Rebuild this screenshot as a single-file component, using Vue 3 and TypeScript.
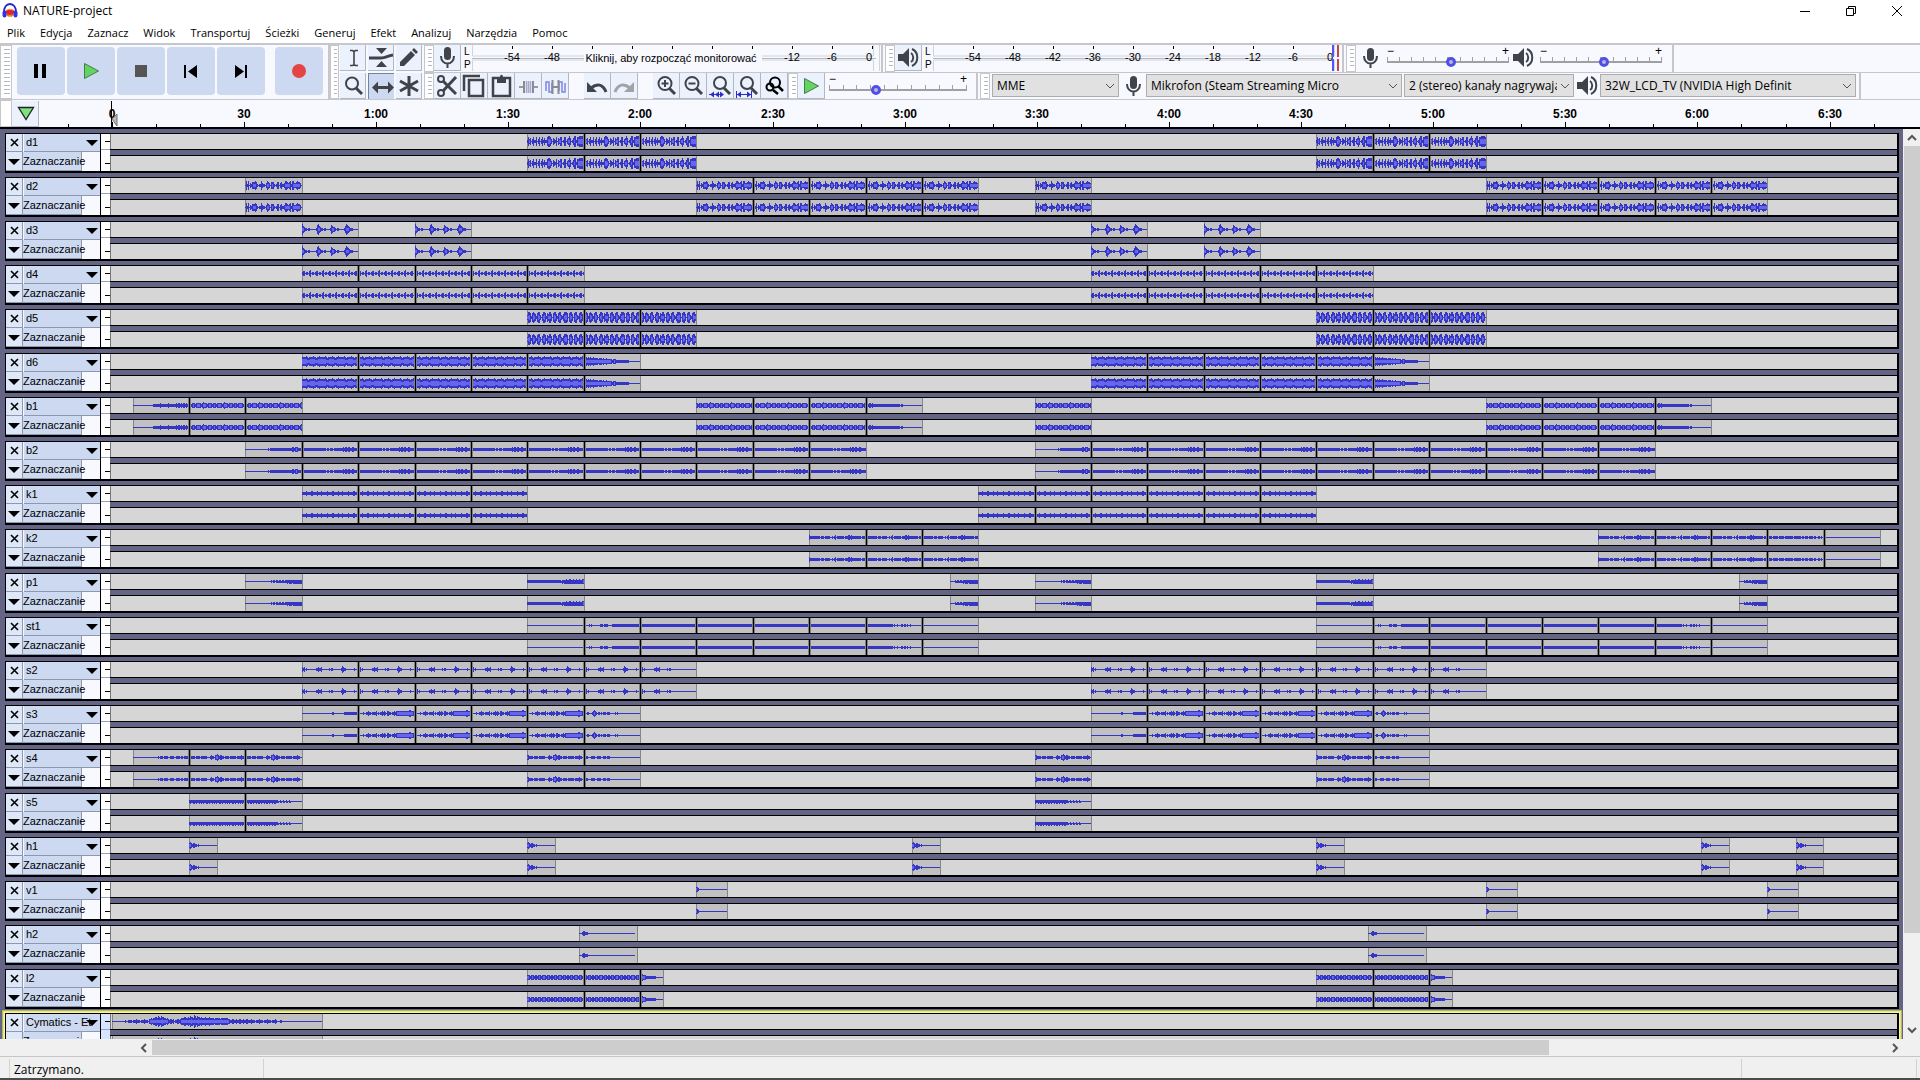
<script setup lang="ts">
interface Run {
  from: number
  to: number
  body: string
  first?: string
  last?: string
}

interface Track {
  name: string
  runs: Run[]
  selected?: boolean
}

interface Piece {
  x: number
  w: number
  peak: string
  rms: string
}

interface Clip {
  x: number
  w: number
  joints: number[]
  pieces: Piece[]
}

const BAR = 56.37
const FIRST_BAR = 21.7
const PX_PER_SECOND = 4.404
const RULER_ZERO = 73

// Each digit is the half height of one pixel column of the waveform;
// a, b and c are columns that reach further down than up.
const tile = (pattern: string, length = 57): string =>
  pattern.repeat(Math.ceil(length / pattern.length)).slice(0, length)
const flat = (length: number): string => '0'.repeat(length)

const shapes = {
  d1: '142302411402402413114554203214032440144023530135514455554',
  d2: '041402133343101142110243203331013302311244323414422343320',
  d3: '53211011000000' + '14532110110000' + '14322101100000' + '135432111000000',
  d4: tile('1220110230110'),
  d5: '255414543145520355414355304553145521355540455304552145530',
  d6: tile('4444543444454434454'),
  d6End: '444343433433332333232232222212221111111111111' + flat(12),
  b1: tile('221222122222123222122'),
  b1Start: flat(20) + tile('11111112', 22) + tile('12122', 15),
  b1End: '2212212' + tile('1', 24) + '1110110' + flat(19),
  b2: tile('1', 23) + '101101110111111111212212211221111'.padEnd(34, '1'),
  b2Start: flat(23) + '101' + tile('1', 20) + '12212221111',
  k1: tile('111121111221111211121'),
  k2: '211111111110111011111001012011111110111221211111111101111',
  k2Mid: '111110111011101111001101110110' + flat(27),
  k2End: '111110111110111110111111110111111101101110111101100110100',
  p1: flat(26) + tile('101', 6) + tile('1b1', 10) + 'a1aaa1aaaaaaaaa',
  p1Long: tile('1', 34) + 'ba1aa2aa22aa2aa2aa2aa22',
  p1Short: flat(5) + tile('1b1', 8) + 'a1aaa1aaaaaaaaa',
  rest: flat(57),
  st: tile('1'),
  stStart: '000001010000000011101111000011' + tile('1', 27),
  stEnd: tile('1', 27) + '010010001101101001' + flat(12),
  s2: '212010000000001121120000000101100000000132110000000010000',
  s3: '110001001121101111201011212102211011212222222222222332221',
  s3Start: flat(30) + '11' + flat(10) + tile('1', 15),
  s3End: '110110001232101101011101110000010100' + flat(21),
  s4: '221111011110111111000121102232122110111101111110111121100',
  s4Start: flat(25) + '10111011110011110011110110111100',
  s4End: '11110001111001111001110111' + flat(31),
  s5: tile('1a11aa1a11a1a'),
  s5End: tile('a11a1aa1', 32) + tile('1b0', 14) + flat(11),
  h1: '2321221101' + flat(18),
  v1: '2210' + flat(27),
  h2: '0001221110' + flat(48),
  l2: tile('2221222122122212'),
  l2End: '2332221111111111' + flat(8),
  cymatics:
    flat(13) + '1001' + tile('11101112', 20) + '22323344354354433232' + tile('1221201', 11) +
    '2333443343544365354434333433343333233333233333332' + tile('2112211', 20) +
    tile('11211101', 28) + '000110' + flat(40),
}

const twice = (from: number, to: number, body: string, first?: string, last?: string): Run[] => [
  { from, to, body, first, last },
  { from: from + 14, to: to + 14, body, first, last },
]
const one = (from: number, to: number, body: string, first?: string, last?: string): Run => ({
  from,
  to,
  body,
  first,
  last,
})

const s = shapes
const tracks: Track[] = [
  { name: 'd1', runs: twice(7, 10, s.d1) },
  { name: 'd2', runs: [...twice(2, 3, s.d2), ...twice(10, 15, s.d2)] },
  { name: 'd3', runs: [...twice(3, 4, s.d3), ...twice(5, 6, s.d3)] },
  { name: 'd4', runs: twice(3, 8, s.d4) },
  { name: 'd5', runs: twice(7, 10, s.d5) },
  { name: 'd6', runs: twice(3, 9, s.d6, s.d6, s.d6End) },
  { name: 'b1', runs: [one(0, 3, s.b1, s.b1Start), one(16, 17, s.b1), ...twice(10, 14, s.b1, s.b1, s.b1End)] },
  { name: 'b2', runs: twice(2, 13, s.b2, s.b2Start) },
  { name: 'k1', runs: [one(3, 7, s.k1), one(15, 21, s.k1)] },
  { name: 'k2', runs: [one(12, 15, s.k2), one(26, 29, s.k2), one(29, 31, s.k2End, s.k2End, s.rest)] },
  {
    name: 'p1',
    runs: [...twice(2, 3, s.p1), ...twice(7, 8, s.p1Long), ...twice(14.5, 15, s.p1Short)],
  },
  {
    name: 'st1',
    runs: [0, 14].flatMap((n) => [
      one(7 + n, 9 + n, s.stStart, s.rest),
      one(9 + n, 13 + n, s.st),
      one(13 + n, 15 + n, s.rest, s.stEnd),
    ]),
  },
  { name: 's2', runs: twice(3, 10, s.s2, s.s2, s.s2.slice(0, 34) + flat(23)) },
  { name: 's3', runs: twice(3, 9, s.s3, s.s3Start, s.s3End) },
  { name: 's4', runs: [one(0, 3, s.s4, s.s4Start), one(16, 17, s.s4), ...twice(7, 9, s.s4, s.s4, s.s4End)] },
  { name: 's5', runs: [one(1, 3, s.s5, s.s5, s.s5End), one(16, 17, s.s5End)] },
  {
    name: 'h1',
    runs: [one(1, 1.49, s.h1), ...twice(7, 7.49, s.h1), ...twice(13.83, 14.32, s.h1), one(29.5, 29.98, s.h1)],
  },
  { name: 'v1', runs: [...twice(10, 10.55, s.v1), one(29, 29.55, s.v1)] },
  { name: 'h2', runs: twice(7.91, 8.94, s.h2) },
  { name: 'l2', runs: twice(7, 9.41, s.l2, s.l2, s.l2End) },
  { name: 'Cymatics - Et', runs: [one(-0.367, 3.36, s.cymatics)], selected: true },
]

const toX = (bar: number): number => Math.round(FIRST_BAR + bar * BAR)

const skewed: Record<string, [number, number]> = { a: [1, 2], b: [0, 1], c: [1, 3] }

function wave(x: number, width: number, digits: string): Piece {
  const spans = digits.slice(0, width).split('').map((d): [number, number] => skewed[d] ?? [Number(d), Number(d)])
  const peak = spans.map(([up, down], i) => `M${x + i} ${7 - up}h1v${up + down + 1}h-1z`).join('')
  const rms = spans
    .map(([up], i) => {
      const low = Math.min(spans[i - 1]?.[0] ?? up, up, spans[i + 1]?.[0] ?? up)
      const h = Math.floor(low * 0.5)
      return low < 2 ? '' : `M${x + i} ${7 - h}h1v${2 * h + 1}h-1z`
    })
    .join('')
  return { x, w: width, peak, rms }
}

function build(run: Run): Clip {
  const x = toX(run.from)
  const w = toX(run.to) - x
  const joints: number[] = []
  const pieces: Piece[] = []
  const long = run.body.length > 60
  const count = long ? 1 : Math.ceil(run.to - run.from - 0.1)
  for (let i = 0; i < count; i++) {
    const start = toX(run.from + i)
    const end = long ? x + w : Math.min(toX(run.from + i + 1), x + w)
    if (i > 0) joints.push(start)
    const digits = i === 0 ? run.first ?? run.body : i === count - 1 ? run.last ?? run.body : run.body
    pieces.push(wave(start, end - start, digits))
  }
  return { x, w, joints, pieces }
}

const lanes = tracks.map((track) => {
  const clips = track.runs.map(build)
  const starts = new Set(clips.map((c) => c.x))
  clips.forEach((c) => {
    if (starts.has(c.x + c.w)) c.joints.push(c.x + c.w)
  })
  return { ...track, clips, joints: clips.flatMap((c) => c.joints) }
})

const ticks = Array.from({ length: 42 }, (_, i) => {
  const seconds = (i - 1) * 10
  const major = seconds % 30 === 0
  const label = seconds < 60 ? `${seconds}` : `${Math.floor(seconds / 60)}:${String(seconds % 60).padStart(2, '0')}`
  return { x: Math.round(RULER_ZERO + seconds * PX_PER_SECOND), major, label: major && seconds >= 0 ? label : '' }
})

const menus = ['Plik', 'Edycja', 'Zaznacz', 'Widok', 'Transportuj', 'Ścieżki', 'Generuj', 'Efekt', 'Analizuj', 'Narzędzia', 'Pomoc']
const levels = [-54, -48, -42, -36, -30, -24, -18, -12, -6, 0]
const levelX = (db: number): number => 400 + Math.round((db * 20) / 3)
const shownOnInput = (db: number): boolean => db < -45 || db > -15
</script>

<template>
  <div class="app">
    <header class="title-bar">
      <svg class="logo" width="16" height="16" viewBox="0 0 16 16">
        <ellipse cx="8" cy="10" rx="4.5" ry="4" fill="#f7a531" />
        <path d="M4 10l1-2 1 3 1-4 1 5 1-5 1 4 1-3 1 2" fill="none" stroke="#e0242a" stroke-width="1.6" />
        <path d="M2 10C1 -2 15 -2 14 10" fill="none" stroke="#1d24cf" stroke-width="1.8" />
        <rect x="0.5" y="7.5" width="4" height="7" rx="2" fill="#2b34ea" />
        <rect x="11.5" y="7.5" width="4" height="7" rx="2" fill="#2b34ea" />
      </svg>
      <h1>NATURE-project</h1>
      <div class="window-buttons">
        <button aria-label="Minimalizuj"><svg width="12" height="12"><path d="M1 6.5h10" /></svg></button>
        <button aria-label="Przywróć"><svg width="12" height="12"><path d="M1.500 3.500h7v7h-7zM3.500 3.500v-2h7v7h-2" /></svg></button>
        <button aria-label="Zamknij"><svg width="12" height="12"><path d="M1 1l10 10M11 1l-10 10" /></svg></button>
      </div>
    </header>

    <nav class="menu">
      <button v-for="menu in menus" :key="menu">{{ menu }}</button>
    </nav>

    <section class="toolbars">
      <div class="bar transport">
        <i class="grip"></i>
        <div class="transport-buttons">
          <button aria-label="Pauza"><svg width="48" height="48"><path d="M17 17h4v14h-4zM25 17h4v14h-4z" /></svg></button>
          <button aria-label="Odtwórz"><svg width="48" height="48"><path d="M17.500 16.500v15l14-7.500z" fill="#61d461" stroke="#4a7a4a" /></svg></button>
          <button aria-label="Zatrzymaj"><svg width="48" height="48"><path d="M18 18h12v12h-12z" fill="#555" /></svg></button>
          <button aria-label="Do początku"><svg width="48" height="48"><path d="M17 18h2v13h-2zM30 18v13l-9-6.500z" /></svg></button>
          <button aria-label="Do końca"><svg width="48" height="48"><path d="M28 18h2v13h-2zM18 18v13l9-6.500z" /></svg></button>
          <button class="record" aria-label="Nagraj"><svg width="48" height="48"><circle cx="24" cy="24" r="7" fill="#e34545" /></svg></button>
        </div>
      </div>

      <div class="bar tools">
        <i class="grip"></i>
        <div class="tool-grid">
          <button class="tool" aria-label="Zaznaczanie"><svg class="ico" viewBox="0 0 26 26"><path d="M10 5.500h2.500l1.500 1 1.500-1h2.500M14 6v14M10 20.500h2.500l1.500-1 1.500 1h2.500" fill="none" stroke-width="1.600" /></svg></button>
          <button class="tool" aria-label="Obwiednia"><svg class="ico" viewBox="0 0 26 26"><path d="M8 3h11l-5.500 6zM8 22h11l-5.500-6z" stroke="none" /><path d="M1 13h12c5 0 6-2 12-3" fill="none" stroke-width="3" /></svg></button>
          <button class="tool" aria-label="Rysowanie"><svg class="ico" viewBox="0 0 26 26"><path d="M4 21v-4l11-11 4 4-11 11zM16 5l2-2 4 4-2 2z" stroke="none" /></svg></button>
          <button class="tool" aria-label="Powiększanie"><svg class="ico" viewBox="0 0 26 26"><g fill="none"><circle cx="12" cy="10.500" r="6" stroke-width="2" /><path d="M16 15l6 6" stroke-width="3" /></g></svg></button>
          <button class="tool pressed" aria-label="Przesuwanie"><svg class="ico" viewBox="0 0 26 26"><path d="M8 13.500h13" stroke-width="3" /><path d="M3 13.500l6-6v12zM25 13.500l-6-6v12z" stroke="none" /></svg></button>
          <button class="tool" aria-label="Wielofunkcyjne"><svg class="ico" viewBox="0 0 26 26"><path d="M13 3v20M4 8l18 10M22 8L4 18" stroke-width="3" /></svg></button>
        </div>
      </div>

      <div class="rows">
        <div class="row">
          <div class="bar">
            <i class="grip"></i>
            <button class="tool" aria-label="Miernik nagrywania"><svg class="ico" viewBox="0 0 26 26"><rect x="10" y="2" width="7" height="13" rx="3.500" stroke="none" /><path d="M7 11c0 10 13 10 13 0M13.500 18v5" fill="none" stroke-width="2" /></svg></button>
            <div class="channels"><span>L</span><span>P</span></div>
            <svg class="meter" width="412" height="26">
              <path d="M0.500 0v11h401V0M0.500 26V15h401v11M407.500 0v26" fill="none" stroke="#d0d4dc" />
              <path d="M0 13.500h404" stroke="#b5b8bd" />
              <rect x="112" y="5" width="178" height="20" fill="#f8f9fe" />
              <g v-for="db in levels" :key="db">
                <path :d="`M${levelX(db)}.500 1v3`" stroke="#000" />
                <text v-if="shownOnInput(db)" :x="db ? levelX(db) : 397" y="16">{{ db }}</text>
              </g>
              <text x="199" y="17">Kliknij, aby rozpocząć monitorować</text>
            </svg>
          </div>
          <div class="bar">
            <i class="grip"></i>
            <button class="tool" aria-label="Miernik odtwarzania"><svg class="ico" viewBox="0 0 26 26"><path d="M3 9h5l6-6v19l-6-6H3z" stroke="none" /><path d="M16 8c3 2 3 7 0 9M17 4c7 3 7 14 0 17" fill="none" stroke-width="2" /></svg></button>
            <div class="channels"><span>L</span><span>P</span></div>
            <svg class="meter" width="412" height="26">
              <path d="M0.500 0v11h401V0M0.500 26V15h401v11" fill="none" stroke="#d0d4dc" />
              <path d="M0 13.500h400" stroke="#b5b8bd" />
              <g v-for="db in levels" :key="db">
                <path :d="`M${levelX(db)}.500 1v3`" stroke="#000" />
                <text :x="db ? levelX(db) : 397" y="16">{{ db }}</text>
              </g>
              <path d="M400 0v12M400 14v12" stroke="#5353ff" stroke-width="2" />
              <path d="M405 0v12M405 14v12" stroke="#c94545" stroke-width="2" />
            </svg>
          </div>
          <div class="bar mixer">
            <i class="grip"></i>
            <svg class="ico" viewBox="0 0 26 26"><rect x="10" y="3" width="7" height="13" rx="3.500" stroke="none" /><path d="M7 11c0 10 13 10 13 0M13.500 18v5" fill="none" stroke-width="2" /></svg>
            <div class="slider">
              <b>−</b><b>+</b>
              <i class="ticks"></i>
              <input type="range" aria-label="Głośność nagrywania" min="0" max="100" value="53" />
            </div>
            <svg class="ico" viewBox="0 0 26 26"><path d="M3 9h5l6-6v19l-6-6H3z" stroke="none" /><path d="M16 8c3 2 3 7 0 9M17 4c7 3 7 14 0 17" fill="none" stroke-width="2" /></svg>
            <div class="slider">
              <b>−</b><b>+</b>
              <i class="ticks"></i>
              <input type="range" aria-label="Głośność odtwarzania" min="0" max="100" value="53" />
            </div>
          </div>
        </div>

        <div class="row">
          <div class="bar edit">
            <i class="grip"></i>
            <button class="tool" aria-label="Wytnij"><svg class="ico" viewBox="0 0 26 26"><g fill="none"><circle cx="7" cy="6" r="3" stroke-width="2" /><circle cx="7" cy="20" r="3" stroke-width="2" /><path d="M9 8l13 13M9 18L22 4" stroke-width="3" /></g></svg></button>
            <button class="tool" aria-label="Kopiuj"><svg class="ico" viewBox="0 0 26 26"><path d="M3 18V3h16M8 7h14v16H8z" fill="none" stroke-width="2.500" /></svg></button>
            <button class="tool" aria-label="Wklej"><svg class="ico" viewBox="0 0 26 26"><path d="M5 5h17v18H5z" fill="none" stroke-width="2.500" /><path d="M9 4h3c0-3 3-3 3 0h3v6H9z" stroke="none" /></svg></button>
            <button class="tool" aria-label="Przytnij"><svg class="ico" viewBox="0 0 26 26"><path d="M4 14h5M18 14h5" stroke="#999" stroke-width="2" /><path d="M9 8v12M18 8v12" stroke="#8a8a90" stroke-width="2" /><path d="M11.500 8v12M13.500 8v12M15.500 8v12" stroke="#a5a9cd" stroke-width="1.500" /></svg></button>
            <button class="tool" aria-label="Wycisz"><svg class="ico" viewBox="0 0 26 26"><path d="M4 18V9h3v10h3v-9M17 18V9h3v10h3v-9" fill="none" stroke="#7d85e8" stroke-width="1.500" /><path d="M10 14h7M10.500 7v14M16.500 7v14" stroke="#8a8a90" stroke-width="2" /></svg></button>
            <span class="space"></span>
            <button class="tool" aria-label="Cofnij"><svg class="ico" viewBox="0 0 26 26"><path d="M3 9v10h10z" stroke="none" /><path d="M7 15c6-5 12-4 15 4" fill="none" stroke-width="3" /></svg></button>
            <button class="tool faded" aria-label="Ponów"><svg class="ico" viewBox="0 0 26 26"><path d="M23 9v10H13z" stroke="none" /><path d="M19 15c-6-5-12-4-15 4" fill="none" stroke-width="3" /></svg></button>
            <span class="space"></span>
            <button class="tool" aria-label="Powiększ"><svg class="ico" viewBox="0 0 26 26"><g fill="none"><circle cx="12" cy="10.500" r="6.500" stroke-width="2" /><path d="M16 15l6 6" stroke-width="3" /><path d="M8.500 10.500h7M12 7v7" stroke-width="2" /></g></svg></button>
            <button class="tool" aria-label="Pomniejsz"><svg class="ico" viewBox="0 0 26 26"><g fill="none"><circle cx="12" cy="10.500" r="6.500" stroke-width="2" /><path d="M16 15l6 6" stroke-width="3" /><path d="M8.500 10.500h7" stroke-width="2" /></g></svg></button>
            <button class="tool" aria-label="Powiększ zaznaczenie"><svg class="ico" viewBox="0 0 26 26"><g fill="none"><circle cx="13" cy="10" r="6" stroke-width="2" /><path d="M17 15l6 6" stroke-width="3" /></g><path d="M2 21.500h14" stroke="#2c2cc8" /><path d="M3 21.500l4-3v6zM8 21.500l4-3v6zM17 21.500l-4-3v6z" fill="#2c2cc8" stroke="none" /></svg></button>
            <button class="tool" aria-label="Dopasuj projekt"><svg class="ico" viewBox="0 0 26 26"><g fill="none"><circle cx="13" cy="10" r="6" stroke-width="2" /><path d="M17 15l6 6" stroke-width="3" /></g><path d="M2.500 18v7M17.500 18v7M3 21.500h14" stroke="#2c2cc8" /><path d="M3 21.500l4-3v6zM17 21.500l-4-3v6z" fill="#2c2cc8" stroke="none" /></svg></button>
            <button class="tool dark" aria-label="Przełącz powiększenie"><svg class="ico" viewBox="0 0 26 26"><g fill="none" stroke-width="2"><circle cx="14" cy="9.500" r="5" /><circle cx="9" cy="14" r="3.500" /><path d="M12 17l5 4M17 13l5 5" stroke-width="2.500" /></g></svg></button>
          </div>
          <div class="bar speed">
            <i class="grip"></i>
            <button class="tool" aria-label="Odtwórz z prędkością"><svg class="ico" viewBox="0 0 26 26"><path d="M6.500 5.500v15l14-7.500z" fill="#61d461" stroke="#4a7a4a" /></svg></button>
            <div class="slider wide">
              <b>−</b><b>+</b>
              <i class="ticks"></i>
              <input type="range" aria-label="Prędkość odtwarzania" min="0" max="100" value="33" />
            </div>
          </div>
          <div class="bar devices">
            <i class="grip"></i>
            <span class="pick host">
              <select aria-label="Host dźwięku"><option>MME</option></select>
              <svg width="10" height="6"><path d="M1 1l4 4 4-4" /></svg>
            </span>
            <svg class="ico" viewBox="0 0 26 26"><rect x="10" y="3" width="7" height="13" rx="3.500" stroke="none" /><path d="M7 11c0 10 13 10 13 0M13.500 18v5" fill="none" stroke-width="2" /></svg>
            <span class="pick device">
              <select aria-label="Urządzenie nagrywające"><option>Mikrofon (Steam Streaming Micro</option></select>
              <svg width="10" height="6"><path d="M1 1l4 4 4-4" /></svg>
            </span>
            <span class="pick inputs">
              <select aria-label="Kanały nagrywające"><option>2 (stereo) kanały nagrywające</option></select>
              <svg width="10" height="6"><path d="M1 1l4 4 4-4" /></svg>
            </span>
            <svg class="ico" viewBox="0 0 26 26"><path d="M3 9h5l6-6v19l-6-6H3z" stroke="none" /><path d="M16 8c3 2 3 7 0 9M17 4c7 3 7 14 0 17" fill="none" stroke-width="2" /></svg>
            <span class="pick device">
              <select aria-label="Urządzenie odtwarzające"><option>32W_LCD_TV (NVIDIA High Definit</option></select>
              <svg width="10" height="6"><path d="M1 1l4 4 4-4" /></svg>
            </span>
          </div>
        </div>
      </div>
    </section>

    <section class="timeline">
      <i class="grip"></i>
      <button class="tool" aria-label="Przypnij głowicę"><svg class="ico" viewBox="0 0 26 26"><path d="M6.500 6.500h15l-7.500 12z" fill="#7fe07f" stroke="#222" stroke-width="1.300" /></svg></button>
      <svg class="ruler" height="27">
        <g v-for="tick in ticks" :key="tick.x">
          <path :d="`M${tick.x}.500 27v${tick.major ? -5 : -3}`" stroke="#000" />
          <text v-if="tick.label" :x="tick.x" y="18">{{ tick.label }}</text>
        </g>
        <path d="M72.500 1v26" stroke="#000" />
        <path d="M73 19l5-5v12z" fill="#b9b9b9" stroke="#777" />
      </svg>
    </section>

    <main class="workspace">
      <div class="tracks">
        <article v-for="lane in lanes" :key="lane.name" class="track" :class="{ selected: lane.selected }">
          <div class="panel">
            <div class="panel-top">
              <button class="cell close" aria-label="Zamknij ścieżkę"><svg width="9" height="9"><path d="M1 1l7 7M8 1L1 8" stroke="#000" stroke-width="1.600" /></svg></button>
              <button class="cell name"><span>{{ lane.name }}</span><svg width="12" height="6"><path d="M0 0h12l-6 6z" /></svg></button>
            </div>
            <div class="panel-bottom">
              <button class="cell fold" aria-label="Zwiń"><svg width="12" height="6"><path d="M0 0h12l-6 6z" /></svg></button>
              <button class="cell select">Zaznaczanie</button>
            </div>
          </div>
          <svg class="scale" width="9" height="37"><path d="M0 15.500h9" stroke="#9aa0b4" /><path d="M4 7.500h5M4 29.500h5" stroke="#000" /></svg>
          <div class="channels-view">
            <template v-for="channel in 2" :key="channel">
              <svg class="channel" height="15" shape-rendering="crispEdges">
                <g v-for="clip in lane.clips" :key="clip.x">
                  <rect :x="clip.x" y="0" :width="clip.w" height="15" fill="#c1c1c1" />
                  <path :d="`M${clip.x}.500 0v15M${clip.x + clip.w}.500 0v15`" stroke="#858585" />
                  <g v-for="piece in clip.pieces" :key="piece.x">
                    <path :d="piece.peak" fill="#3535c6" />
                    <path :d="piece.rms" fill="#6666ea" />
                  </g>
                </g>
                <g v-for="joint in lane.joints" :key="joint">
                  <path :d="`M${joint - 1}.500 0v15M${joint + 1}.500 0v15`" stroke="#808080" />
                  <path :d="`M${joint}.500 0v15`" stroke="#000" />
                </g>
              </svg>
              <i v-if="channel === 1" class="divider"></i>
            </template>
          </div>
        </article>
      </div>
      <div class="v-scroll">
        <svg width="17" height="17"><path d="M5 11l4-4 4 4" /></svg>
        <i></i>
        <svg width="17" height="17"><path d="M5 6l4 4 4-4" /></svg>
      </div>
    </main>

    <div class="h-scroll">
      <svg width="16" height="16"><path d="M10 4l-4 4 4 4" /></svg>
      <div class="h-track"><i></i></div>
      <svg width="16" height="16"><path d="M6 4l4 4-4 4" /></svg>
    </div>

    <footer class="status">
      <span class="state">Zatrzymano.</span>
      <span class="message"></span>
      <span class="rate"></span>
    </footer>
  </div>
</template>

<style>
body {
  margin: 0;
  overflow: hidden;
}
</style>

<style scoped>
.app {
  display: flex;
  flex-direction: column;
  height: 100vh;
  background: #fff;
  color: #000;
  font: 12px/16px "Open Sans", "Noto Sans", sans-serif;
}
button {
  margin: 0;
  padding: 0;
  border: 0;
  background: none;
  color: inherit;
  font: inherit;
}
svg {
  display: block;
  flex: none;
}

.title-bar {
  display: flex;
  align-items: center;
  height: 22px;
  padding-left: 2px;
}
.title-bar h1 {
  flex: 1;
  margin: 0 0 0 5px;
  font-size: 12px;
  font-weight: 400;
}
.window-buttons {
  display: flex;
}
.window-buttons button {
  display: flex;
  align-items: center;
  justify-content: center;
  width: 46px;
  height: 20px;
}
.window-buttons path {
  fill: none;
  stroke: #000;
}

.menu {
  display: flex;
  gap: 15px;
  height: 21px;
  padding-left: 7px;
  font-size: 11px;
}

.toolbars {
  display: flex;
  flex: none;
  height: 54px;
  border-top: 2px solid #c6c7ca;
  border-bottom: 1px solid #c6c7ca;
  background: #f8f9fe;
}
.bar {
  display: flex;
  align-items: center;
  box-sizing: border-box;
  border-right: 2px solid #c6c7ca;
}
.grip {
  flex: none;
  align-self: stretch;
  box-sizing: border-box;
  width: 10px;
  border: solid #fff;
  border-width: 4px 2px 4px 4px;
  outline: 1px solid #c6c7ca;
  outline-offset: -1px;
  background: repeating-linear-gradient(#b4b8c0 0 1px, #fff 1px 4px);
}
.transport {
  width: 330px;
}
.transport .grip {
  width: 12px;
}
.transport-buttons {
  display: flex;
  gap: 2px;
  margin: 0 0 2px 5px;
}
.transport-buttons button {
  border-radius: 4px;
  background: #ccd9f0;
}
.transport-buttons .record {
  margin-left: 8px;
}
.tool-grid {
  display: grid;
  grid-template-columns: repeat(3, 26px);
  gap: 2px;
}
.tools {
  width: 94px;
  border-right: 0;
}
.tools .grip {
  width: 9px;
  margin-right: 1px;
}
.tool {
  flex: none;
  box-sizing: border-box;
  width: 27px;
  height: 26px;
  border: solid #b3b7bf;
  border-width: 0 1px 1px 0;
  background: #ebf1fd;
}
.tool-grid .tool {
  width: 26px;
}
.tool.pressed {
  border-color: #7381a5;
  border-width: 1px 0 0 1px;
  background: #ccd9f0;
}
.ico {
  width: 26px;
  height: 26px;
  fill: #40444a;
  stroke: #40444a;
}
.faded .ico {
  fill: #a0a3a8;
  stroke: #a0a3a8;
}
.dark .ico {
  stroke: #000;
}
.rows {
  display: flex;
  flex: 1;
  flex-direction: column;
}
.row {
  display: flex;
  box-sizing: border-box;
  height: 27px;
}
.row + .row {
  border-top: 1px solid #c6c7ca;
}
.row .bar {
  align-items: flex-start;
  padding-right: 2px;
  margin-right: 2px;
}
.channels {
  display: flex;
  flex-direction: column;
  width: 8px;
  padding-left: 3px;
  font: 10px/13px "Liberation Sans", Arial, sans-serif;
}
.meter {
  margin-right: -5px;
}
.meter text {
  font: 11px "Liberation Sans", Arial, sans-serif;
  text-anchor: middle;
}
.mixer .ico {
  margin-left: 1px;
}
.row .mixer {
  width: 328px;
}
.slider {
  position: relative;
  display: flex;
  justify-content: space-between;
  box-sizing: border-box;
  width: 122px;
  height: 26px;
  margin-left: 4px;
}
.slider.wide {
  width: 138px;
}
.slider b {
  font: 12px/12px "Liberation Sans", Arial, sans-serif;
}
.ticks {
  position: absolute;
  inset: 12px 0 auto;
  height: 4px;
  border-bottom: 2px solid #a0a0a3;
  border-right: 1px solid #a0a0a3;
  background: repeating-linear-gradient(90deg, #a0a0a3 0 1px, transparent 1px 10%);
}
.slider input {
  position: absolute;
  inset: 11px 0 auto;
  width: 100%;
  height: 12px;
  margin: 0;
  appearance: none;
  background: none;
}
.slider input::-webkit-slider-thumb {
  appearance: none;
  box-sizing: border-box;
  width: 10px;
  height: 10px;
  border: 3px solid #4f4fe8;
  border-radius: 50%;
  background: #b6b6dc;
}
.space {
  width: 14px;
}
.row .edit {
  width: 364px;
  margin-right: 0;
  padding: 0;
  border-right: 0;
}
.edit .space + .tool {
  margin-left: 1px;
}
.row .speed {
  width: 190px;
  margin-right: 2px;
}
.row .devices {
  width: 881px;
}
.pick {
  position: relative;
  display: block;
  margin-top: 1px;
}
.pick select {
  display: block;
  box-sizing: border-box;
  width: 100%;
  height: 23px;
  padding: 0 16px 0 4px;
  border: 1px solid #adadad;
  border-radius: 0;
  appearance: none;
  background: #e1e1e1;
  color: #000;
  font: 12px "Open Sans", "Noto Sans", sans-serif;
}
.pick svg {
  position: absolute;
  right: 4px;
  top: 9px;
  fill: none;
  stroke: #555;
}
.host {
  width: 127px;
  margin-right: 1px;
  margin-left: 2px;
}
.device {
  width: 256px;
}
.inputs {
  width: 170px;
  margin-left: 2px;
}

.timeline {
  display: flex;
  flex: none;
  height: 29px;
  box-sizing: border-box;
  border-bottom: 2px solid #000;
  background: #f8f9fe;
}
.timeline .grip {
  width: 12px;
  border-width: 4px;
  background: #fff;
}
.timeline .tool {
  margin-top: 1px;
}
.ruler {
  flex: 1;
  overflow: hidden;
  min-width: 0;
}
.ruler text {
  font: bold 12px "Liberation Sans", Arial, sans-serif;
  text-anchor: middle;
}

.workspace {
  display: flex;
  flex: 1;
  min-height: 0;
  overflow: hidden;
}
.tracks {
  display: flex;
  flex: 1;
  flex-direction: column;
  gap: 4px;
  min-width: 0;
  padding: 4px 4px 0 5px;
  background: #646484;
}
.track {
  display: flex;
  flex: none;
  box-sizing: border-box;
  height: 40px;
  border: solid #000;
  border-width: 1px 2px 2px 1px;
}
.track.selected {
  box-shadow: 0 0 0 1px #f7f79a, 0 0 0 2px #e6e67c, 0 0 0 3px #b4b472;
}
.panel {
  box-sizing: border-box;
  width: 95px;
  border-right: 1px solid #000;
  background: #f8f9fe;
  font: 11px/17px "Liberation Sans", Arial, sans-serif;
}
.panel-top,
.panel-bottom {
  display: flex;
}
.cell {
  display: flex;
  align-items: center;
  justify-content: center;
  box-sizing: border-box;
  height: 18px;
  border: solid #8d97ad;
  border-width: 0 1px 1px 0;
  background: #ccd9f0;
}
.panel-bottom .cell {
  height: 19px;
  padding-top: 1px;
}
.close,
.fold {
  width: 17px;
  background: #dfe8f8;
}
.name {
  flex: 1;
  justify-content: space-between;
  margin-left: 1px;
  padding: 0 2px;
  border-right: 0;
  white-space: nowrap;
}
.name span {
  width: 56px;
  text-align: left;
  overflow: visible;
}
.name svg {
  z-index: 1;
}
.select {
  justify-content: flex-start;
  width: 59px;
  white-space: nowrap;
}
.scale {
  background: #fff;
}
.selected .scale {
  background: #d6e4ff;
}
.channels-view {
  flex: 1;
  min-width: 0;
}
.channel {
  box-sizing: border-box;
  width: 100%;
  border-left: 1px solid #777;
  background: #d6d6d6;
  overflow: hidden;
}
.divider {
  display: block;
  height: 5px;
  border: solid #000;
  border-width: 1px 0;
  background: #646484;
}
.v-scroll {
  display: flex;
  flex-direction: column;
  width: 17px;
  background: #f0f0f0;
}
.v-scroll i {
  flex: 0 0 86.5%;
  margin-left: 1px;
  background: #cdcdcd;
}
.v-scroll svg:last-child {
  margin-top: auto;
}
.v-scroll path,
.h-scroll path {
  fill: none;
  stroke: #555;
  stroke-width: 2;
}
.h-scroll {
  display: flex;
  flex: none;
  height: 16px;
  padding: 1px 17px 0 136px;
  background: #f0f0f0;
}
.h-track {
  flex: 1;
}
.h-track i {
  display: block;
  width: 80.5%;
  height: 15px;
  background: #cdcdcd;
}
.status {
  display: flex;
  flex: none;
  box-sizing: border-box;
  height: 24px;
  padding: 2px 3px 0 9px;
  border-top: 1px solid #c6c6c6;
  border-bottom: 2px solid #4c4c4c;
  background: #f0f0f0;
  font-size: 12px;
  line-height: 22px;
}
.status span {
  box-sizing: border-box;
  border-left: 1px solid #d2d2d2;
}
.status .state {
  width: 254px;
  padding-left: 4px;
}
.status .message {
  flex: 1;
}
.status .rate {
  width: 176px;
  border-right: 1px solid #d2d2d2;
}
</style>
